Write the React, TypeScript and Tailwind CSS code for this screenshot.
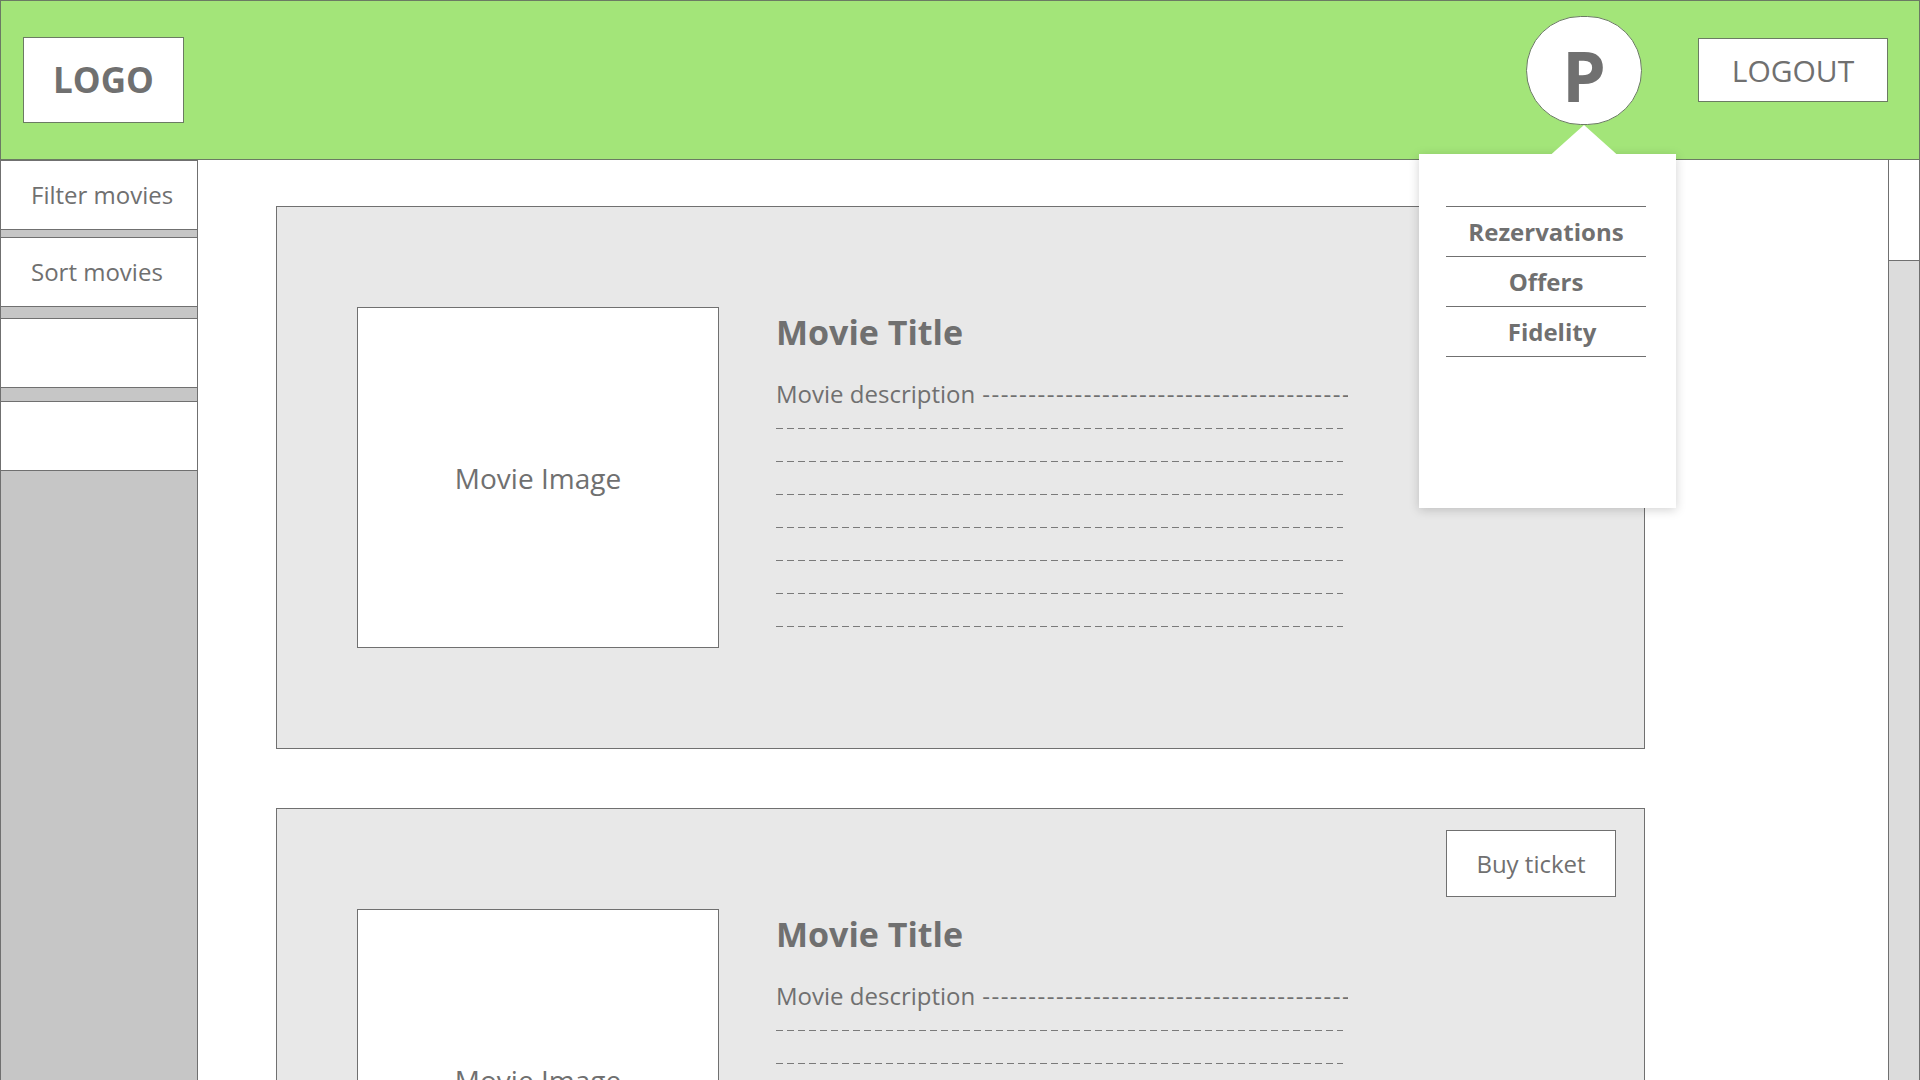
const dashLines = [0, 1, 2, 3, 4, 5, 6];

function MovieCard() {
  return (
    <div className="relative flex h-[543px] w-[1369px] shrink-0 items-center border border-[#707070] bg-[#e8e8e8] pl-[80px]">
      <button className="absolute right-[28px] top-[21px] flex h-[67px] w-[170px] items-center justify-center border border-[#707070] bg-white text-[24px] text-[#707070]">
        Buy ticket
      </button>

      <div className="flex h-[341px] w-[362px] shrink-0 items-center justify-center border border-[#707070] bg-white">
        <span className="text-[28px] text-[#707070]">Movie Image</span>
      </div>

      <div className="ml-[57px] flex h-[341px] flex-col pt-[5px]">
        <h2 className="text-[34px] font-bold leading-[40px] text-[#707070]">Movie Title</h2>
        <div className="mt-[25px] flex w-[572px] items-center text-[24px] leading-[33px] text-[#707070]">
          <span className="whitespace-nowrap">Movie description</span>
          <span className="ml-[7px] flex-1 overflow-hidden whitespace-nowrap tracking-[1.5px]">
            {"-".repeat(60)}
          </span>
        </div>
        {dashLines.map((i) => (
          <div key={i} className="flex h-[33px] w-[567px] items-start pt-[18px]">
            <div className="h-px w-full bg-[repeating-linear-gradient(90deg,#7a7a7a_0_7px,transparent_7px_11px)]" />
          </div>
        ))}
      </div>
    </div>
  );
}

export default function App() {
  const menu = ["Rezervations", "Offers", "Fidelity"];

  return (
    <div className="flex h-[1080px] w-full flex-col overflow-hidden bg-white font-['Open_Sans',sans-serif]">
      {/* Header */}
      <header className="relative z-10 flex h-[160px] shrink-0 items-start border border-[#6b7b63] bg-[#a3e579]">
        <div className="ml-[22px] mt-[36px] flex h-[86px] w-[161px] items-center justify-center border border-[#6b7b63] bg-white">
          <span className="text-[35px] font-bold text-[#707070]">LOGO</span>
        </div>

        <div className="ml-auto mr-[31px] mt-[15px] flex items-start gap-[56px]">
          <div className="relative">
            <div className="flex h-[109px] w-[116px] items-center justify-center rounded-full border border-[#6b7b63] bg-white pt-[8px]">
              <span className="text-[70px] font-bold leading-none text-[#707070]">P</span>
            </div>

            {/* Profile dropdown */}
            <div className="absolute left-[-107px] top-[138px] h-[354px] w-[257px] bg-white pl-[27px] pr-[30px] pt-[52px] shadow-[0_2px_10px_rgba(0,0,0,0.18)]">
              <ul className="border-t border-[#707070]">
                {menu.map((m) => (
                  <li
                    key={m}
                    className="flex h-[50px] items-center justify-center border-b border-[#707070] text-[24px] font-bold leading-none text-[#707070]"
                  >
                    <span className={m === "Fidelity" ? "ml-[12px]" : ""}>{m}</span>
                  </li>
                ))}
              </ul>
            </div>
            <div className="absolute left-1/2 top-[109px] h-[30px] w-[67px] -translate-x-1/2 bg-white [clip-path:polygon(50%_0,100%_100%,0_100%)]" />
          </div>

          <button className="mt-[22px] flex h-[64px] w-[190px] items-center justify-center border border-[#6b7b63] bg-white text-[30px] text-[#707070]">
            LOGOUT
          </button>
        </div>
      </header>

      <div className="flex min-h-0 flex-1">
        {/* Sidebar */}
        <aside className="flex w-[198px] shrink-0 flex-col border-x border-[#707070] bg-[#c6c6c6]">
          <div className="flex h-[70px] items-center border-y border-[#707070] bg-white pl-[30px] text-[24px] text-[#707070]">
            Filter movies
          </div>
          <div className="mt-[7px] flex h-[70px] items-center border-y border-[#707070] bg-white pl-[30px] text-[24px] text-[#707070]">
            Sort movies
          </div>
          <div className="mt-[11px] h-[70px] border-y border-[#707070] bg-white" />
          <div className="mt-[13px] h-[70px] border-y border-[#707070] bg-white" />
        </aside>

        {/* Movie list */}
        <main className="flex min-w-0 flex-1 flex-col gap-[59px] pl-[78px] pt-[46px]">
          <MovieCard />
          <MovieCard />
        </main>

        {/* Scrollbar */}
        <div className="flex w-[32px] shrink-0 flex-col border-x border-[#707070] bg-[#dcdcdc]">
          <div className="h-[101px] border-b border-[#707070] bg-white" />
        </div>
      </div>
    </div>
  );
}
